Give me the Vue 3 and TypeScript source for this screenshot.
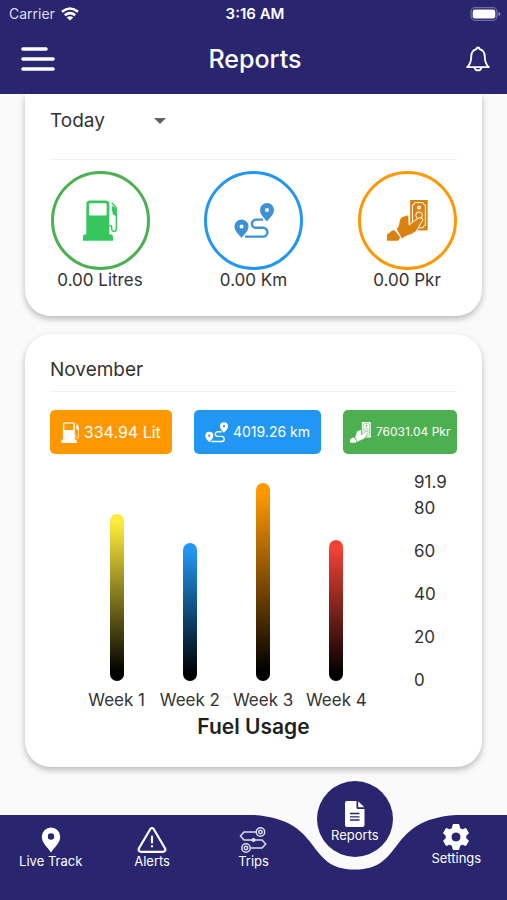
<script setup lang="ts">
import { ref } from 'vue'

interface Week {
  name: string
  value: number
  color: string
}

const period = ref('Today')
const peak = 91.9
const weeks: Week[] = [
  { name: 'Week 1', value: 77.5, color: '#ffeb3b' },
  { name: 'Week 2', value: 64, color: '#2196f3' },
  { name: 'Week 3', value: 91.9, color: '#ff9800' },
  { name: 'Week 4', value: 65.5, color: '#f44336' },
]
const ticks = ['91.9', '80', '60', '40', '20', '0']

const barStyle = (week: Week) => ({
  height: `${(week.value / peak) * 100}%`,
  backgroundImage: `linear-gradient(${week.color}, ${week.color} 5%, #000 95%)`,
})
</script>

<template>
  <div class="app">
    <svg class="defs" aria-hidden="true">
      <symbol id="pump" viewBox="0 0 102 122">
        <path fill="currentColor" fill-rule="evenodd" d="M10 12Q10 1 21 1H68Q79 1 79 12V102H82Q90 102 90 110V122H0V110Q0 102 8 102H10ZM22 9Q18 9 18 13V42Q18 46 22 46H67Q71 46 71 42V13Q71 9 67 9Z" />
        <path fill="none" stroke="currentColor" stroke-width="4" d="M86 8L97 19Q100 22 100 28V84Q100 94 93 94Q86 94 86 86V80Q86 76 79 76" />
        <path fill="currentColor" d="M88 16L99 24V48L90 43Q84 30 88 16Z" />
      </symbol>
      <symbol id="route" viewBox="0 0 40 36">
        <path fill="none" stroke="currentColor" stroke-width="2.4" d="M11 33.6H29A4.4 4.4 0 0 0 29 24.8H22A4.1 4.1 0 0 1 22 16.6H29" />
        <path fill="currentColor" fill-rule="evenodd" d="M7.5 16.5A7 7 0 0 1 14.5 23.5C14.5 28 10.5 31 7.5 35C4.5 31 .5 28 .5 23.5A7 7 0 0 1 7.5 16.5ZM7.5 21.5A2 2 0 1 0 7.5 25.5A2 2 0 1 0 7.5 21.5Z" />
        <path fill="currentColor" fill-rule="evenodd" d="M33 0A7 7 0 0 1 40 7C40 11.5 36 14.5 33 18.5C30 14.5 26 11.5 26 7A7 7 0 0 1 33 0ZM33 5A2 2 0 1 0 33 9A2 2 0 1 0 33 5Z" />
      </symbol>
      <symbol id="cash" viewBox="0 0 124 124">
        <path fill="currentColor" d="M70 0H123V92H70Z" />
        <path class="cut" fill="none" stroke-width="3" d="M84 8H109Q109 15 116 15V77Q109 77 109 84H84Q84 77 77 77V15Q84 15 84 8Z" />
        <circle class="cut" fill="none" stroke-width="3" cx="97" cy="46" r="10" />
        <circle class="cut" fill="none" stroke-width="4" cx="97" cy="23" r="4" />
        <circle class="cut" fill="none" stroke-width="3" cx="97" cy="72" r="4" />
        <path class="cut" fill="currentColor" stroke-width="3" d="M28 88Q37 78 37 64Q40 49 54 48L66 44L67 76Q84 60 98 54Q107 52 109 60Q100 72 94 86Q88 98 76 103L60 109Q52 112 45 119Z" />
        <path fill="currentColor" d="M0 104L16 92Q22 90 26 95L40 113L34 123H0Z" />
      </symbol>
    </svg>

    <header class="top">
      <div class="status">
        <span class="carrier">
          Carrier
          <svg width="18" height="14" viewBox="0 0 18 14" fill="none" stroke="#fff" stroke-width="2.6">
            <path d="M1 4.8Q9 -1.8 17 4.8M3.8 8.2Q9 4 14.2 8.2" />
            <path d="M9 13.5L5.8 10.4Q9 8 12.2 10.4Z" fill="#fff" stroke="none" />
          </svg>
        </span>
        <span class="time">3:16 AM</span>
        <svg class="battery" width="31" height="14" viewBox="0 0 31 14">
          <rect x="1" y=".7" width="26" height="12.6" rx="4" fill="none" stroke="#6f6da3" stroke-width="1.3" />
          <rect x="2.7" y="2.4" width="22.6" height="9.2" rx="2.4" fill="#fff" />
          <path d="M28.5 5Q30.5 5.5 30.5 7T28.5 9Z" fill="#8b89b3" />
        </svg>
      </div>
      <div class="bar">
        <button class="icon-button" type="button" aria-label="Menu">
          <svg width="36" height="26" viewBox="0 0 36 26" stroke="#fff" stroke-width="3.6" stroke-linecap="round">
            <path d="M3 3H26M3 13H33M3 23H33" />
          </svg>
        </button>
        <h1>Reports</h1>
        <button class="icon-button bell" type="button" aria-label="Notifications">
          <svg width="24" height="27" viewBox="0 0 24 27" fill="none" stroke="#fff" stroke-width="1.8" stroke-linejoin="round">
            <path d="M12 1.5Q13.3 1.5 13.6 3.2C17.4 4.2 18.8 7.5 18.8 11C18.8 16.5 20 18.5 22.8 21.2H1.2C4 18.5 5.2 16.5 5.2 11C5.2 7.5 6.6 4.2 10.4 3.2Q10.7 1.5 12 1.5Z" />
            <path d="M8.5 21.5A3.6 3.8 0 0 0 15.5 21.5" />
          </svg>
        </button>
      </div>
    </header>

    <main>
      <section class="card summary">
        <div class="picker">
          <select v-model="period" aria-label="Period">
            <option>Today</option>
          </select>
          <svg width="12" height="6" viewBox="0 0 12 6"><path d="M0 0H12L6 6Z" fill="#616161" /></svg>
        </div>
        <div class="totals">
          <div class="total">
            <div class="ring green"><svg width="34" height="41"><use href="#pump" /></svg></div>
            <span>0.00 Litres</span>
          </div>
          <div class="total">
            <div class="ring blue"><svg width="40" height="36"><use href="#route" /></svg></div>
            <span>0.00 Km</span>
          </div>
          <div class="total">
            <div class="ring orange"><svg width="41" height="41"><use href="#cash" /></svg></div>
            <span>0.00 Pkr</span>
          </div>
        </div>
      </section>

      <section class="card month">
        <h2>November</h2>
        <div class="pills">
          <div class="pill fuel"><svg width="18" height="21"><use href="#pump" /></svg>334.94 Lit</div>
          <div class="pill distance"><svg width="23" height="21"><use href="#route" /></svg>4019.26 km</div>
          <div class="pill cost"><svg width="21" height="21"><use href="#cash" /></svg>76031.04 Pkr</div>
        </div>
        <div class="chart">
          <div class="weeks">
            <div v-for="week in weeks" :key="week.name" class="week">
              <div class="track"><div class="column" :style="barStyle(week)"></div></div>
              <span>{{ week.name }}</span>
            </div>
          </div>
          <div class="axis">
            <span v-for="tick in ticks" :key="tick">{{ tick }}</span>
          </div>
        </div>
        <h3>Fuel Usage</h3>
      </section>
    </main>

    <nav>
      <svg class="wave" viewBox="0 0 1000 85" preserveAspectRatio="none" aria-hidden="true">
        <path fill="#29266f" d="M0 0H500C640 4.5 600 54.6 700 54.6C800 54.6 760 4.5 900 0H1000V85H0Z" />
      </svg>
      <a href="#live">
        <svg width="20" height="26" viewBox="0 0 20 26">
          <path fill="#fff" fill-rule="evenodd" d="M10 .5A9.2 9.2 0 0 1 19.2 9.7C19.2 16 13 20.5 10 25.5C7 20.5 .8 16 .8 9.7A9.2 9.2 0 0 1 10 .5ZM10 6.3A3.2 3.2 0 1 0 10 12.7A3.2 3.2 0 1 0 10 6.3Z" />
        </svg>
        Live Track
      </a>
      <a href="#alerts">
        <svg width="30" height="26" viewBox="0 0 30 26" fill="none" stroke="#fff" stroke-width="2.2" stroke-linejoin="round" stroke-linecap="round">
          <path d="M13.2 2.2Q15 -.2 16.8 2.2L28 21.2Q29.2 24.5 26 24.8H4Q.8 24.5 2 21.2Z" />
          <path d="M15 9.5V15.5M15 19V19.4" />
        </svg>
        Alerts
      </a>
      <a href="#trips">
        <svg width="28" height="26" viewBox="0 0 28 26" fill="none" stroke="#dcdcf0" stroke-width="1.5">
          <circle cx="21.5" cy="5" r="4.2" />
          <circle cx="21.5" cy="5" r="1.7" />
          <circle cx="7" cy="21" r="4.2" />
          <circle cx="7" cy="21" r="1.7" />
          <path d="M17.2 5H5L1.5 9L5 13H23L26.8 17L23 21H11.2" />
          <circle cx="14.5" cy="13" r="1.3" fill="#dcdcf0" />
        </svg>
        Trips
      </a>
      <a class="current" href="#reports" aria-current="page">
        <svg width="20" height="26" viewBox="0 0 20 26">
          <path fill="#fff" d="M2 0H11.5V6.5Q11.5 8 13 8H19.5V24Q19.5 26 17.5 26H2Q0 26 0 24V2Q0 0 2 0ZM13.2 .3L19.3 6.3H13.2Z" />
          <path stroke="#29266f" stroke-width="1.3" d="M5 12.5H14.5M5 15.8H14.5M5 19H14.5" />
        </svg>
        Reports
      </a>
      <a class="settings" href="#settings">
        <svg width="26" height="26" viewBox="0 0 26 26">
          <path fill="#fff" stroke="#fff" stroke-linejoin="round" fill-rule="evenodd" d="M10.2 .5H15.8L16.5 4.2L19.3 5.8L22.8 4.5L25.5 9.2L22.8 11.6V14.4L25.5 16.8L22.8 21.5L19.3 20.2L16.5 21.8L15.8 25.5H10.2L9.5 21.8L6.7 20.2L3.2 21.5L.5 16.8L3.2 14.4V11.6L.5 9.2L3.2 4.5L6.7 5.8L9.5 4.2ZM13 8A5 5 0 1 0 13 18A5 5 0 1 0 13 8Z" />
        </svg>
        Settings
      </a>
    </nav>
  </div>
</template>

<style>
body {
  margin: 0;
  background: #fafafa;
}
</style>

<style scoped>
* {
  box-sizing: border-box;
}

.app {
  display: flex;
  flex-direction: column;
  height: 100vh;
  overflow: hidden;
  background: #fafafa;
  color: #333;
  font-family: Inter, 'Liberation Sans', sans-serif;
  font-size: 17px;
  line-height: 20px;
}

svg {
  display: block;
  flex: none;
}

.defs {
  position: absolute;
  width: 0;
  height: 0;
}

.cut {
  stroke: var(--surface);
}

.top {
  flex: none;
  background: #29266f;
  color: #fff;
}

.status {
  display: grid;
  grid-template-columns: 1fr auto 1fr;
  align-items: center;
  height: 27px;
  padding: 0 6px 0 9px;
  font-size: 14px;
}

.carrier {
  display: flex;
  align-items: center;
  gap: 6px;
  color: #dddcee;
}

.time {
  font-size: 15px;
  font-weight: 600;
}

.battery {
  justify-self: end;
}

.bar {
  display: grid;
  grid-template-columns: 1fr auto 1fr;
  align-items: center;
  height: 67px;
  padding: 0 17px 3px 20px;
}

.icon-button {
  display: flex;
  justify-self: start;
  padding: 0;
  border: 0;
  background: none;
}

.bell {
  justify-self: end;
}

h1 {
  margin: 0;
  font-size: 25px;
  font-weight: 500;
  line-height: 30px;
}

main {
  flex: 1;
  min-height: 0;
  padding: 0 25px;
  overflow: hidden;
}

.card {
  --surface: #fff;
  padding: 0 25px;
  border-radius: 26px;
  background: #fff;
  box-shadow: 0 3px 6px rgba(0, 0, 0, 0.26);
}

.summary {
  padding-bottom: 26px;
  border-radius: 0 0 26px 26px;
}

.picker {
  display: flex;
  align-items: center;
  height: 66px;
  padding-bottom: 12px;
  border-bottom: 1px solid #f1f1f1;
}

.picker select {
  width: 120px;
  margin-right: -16px;
  padding: 0;
  border: 0;
  outline: 0;
  appearance: none;
  background: none;
  color: #333;
  font: inherit;
  font-size: 19px;
  line-height: 28px;
}

.picker svg {
  pointer-events: none;
}

.totals {
  display: flex;
  justify-content: space-between;
  padding-top: 11px;
}

.total {
  display: flex;
  flex-direction: column;
  align-items: center;
  width: 100px;
  white-space: nowrap;
}

.ring {
  display: flex;
  align-items: center;
  justify-content: center;
  width: 99px;
  height: 99px;
  border: 3px solid;
  border-radius: 50%;
}

.green {
  border-color: #4caf50;
  color: #35c75d;
}

.blue {
  border-color: #2196f3;
  color: #3e91d2;
}

.orange {
  border-color: #ff9800;
  color: #d9820f;
}

.month {
  margin-top: 18px;
  padding-top: 22px;
  padding-bottom: 26px;
}

h2 {
  margin: 0;
  padding-bottom: 7px;
  border-bottom: 1px solid #f1f1f1;
  font-size: 19px;
  font-weight: 400;
  line-height: 28px;
}

.pills {
  display: flex;
  gap: 22px;
  margin-top: 18px;
}

.pill {
  display: flex;
  align-items: center;
  justify-content: center;
  gap: 5px;
  height: 44px;
  border-radius: 5px;
  color: #fff;
  white-space: nowrap;
}

.fuel {
  --surface: #ff9800;
  flex: 122 1 0;
  background: #ff9800;
  font-size: 16px;
}

.distance {
  --surface: #2196f3;
  flex: 128 1 0;
  background: #2196f3;
  font-size: 14px;
}

.cost {
  --surface: #4caf50;
  flex: 114 1 0;
  background: #4caf50;
  font-size: 12px;
}

.chart {
  display: flex;
  gap: 41px;
  margin-top: 18px;
  padding-left: 30px;
}

.weeks {
  display: flex;
  flex: 1;
  padding-top: 11px;
}

.week {
  display: flex;
  flex: 1;
  flex-direction: column;
  align-items: center;
  gap: 9px;
  white-space: nowrap;
}

.track {
  display: flex;
  align-items: flex-end;
  height: 198px;
}

.column {
  width: 14px;
  border-radius: 7px;
}

.axis {
  width: 43px;
}

.axis span {
  display: block;
  height: 43px;
}

.axis span:first-child {
  height: 26px;
}

.axis span:last-child {
  height: 20px;
}

h3 {
  margin: 3px 0 0;
  color: #1f1f1f;
  font-size: 21px;
  font-weight: 600;
  line-height: 28px;
  text-align: center;
}

nav {
  position: relative;
  display: grid;
  flex: none;
  grid-template-columns: repeat(5, 1fr);
  align-items: start;
  height: 85px;
}

.wave {
  position: absolute;
  inset: 0;
  width: 100%;
  height: 100%;
}

nav a {
  position: relative;
  display: flex;
  flex-direction: column;
  align-items: center;
  padding-top: 12px;
  color: #fff;
  font-size: 13px;
  line-height: 16px;
  text-decoration: none;
  white-space: nowrap;
}

nav .settings {
  padding-top: 9px;
}

nav .current {
  justify-self: center;
  width: 76px;
  height: 76px;
  margin-top: -34px;
  padding-top: 20px;
  border-radius: 50%;
  background: #29266f;
}
</style>
